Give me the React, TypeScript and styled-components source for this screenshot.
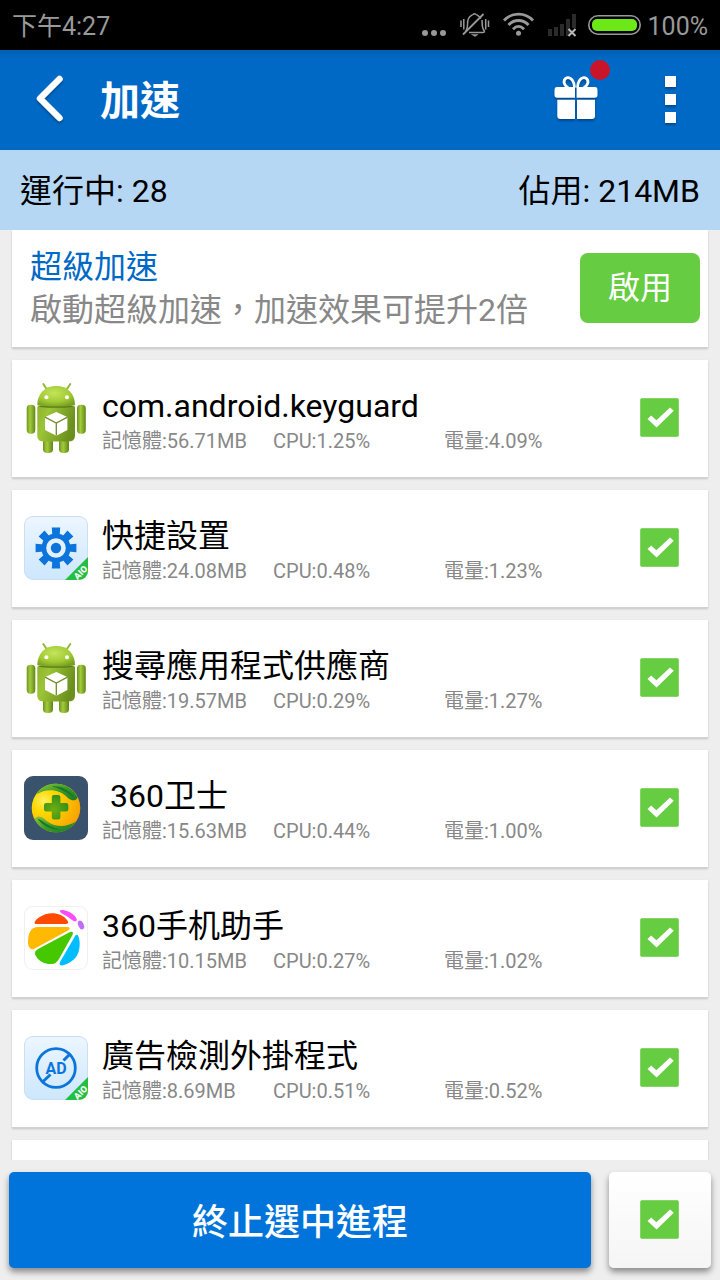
import React, { useState } from "react";
import styled, { createGlobalStyle } from "styled-components";

const GlobalStyle = createGlobalStyle`
  * { box-sizing: border-box; }
  body {
    margin: 0;
    background: #eeeeee;
    font-family: Roboto, "Noto Sans CJK TC", sans-serif;
    color: #000;
  }
  button { font-family: inherit; border: 0; padding: 0; cursor: pointer; }
  svg { display: block; flex: none; }
`;

const Screen = styled.div`
  display: flex;
  flex-direction: column;
  height: 100vh;
`;

const StatusBar = styled.div`
  flex: none;
  display: flex;
  align-items: center;
  justify-content: space-between;
  height: 50px;
  padding: 0 12px;
  background: #000;
  color: #999;
  font-size: 25px;
  line-height: 30px;
`;

const StatusText = styled.span`
  padding-top: 3px;
`;

const StatusIcons = styled.div`
  display: flex;
  align-items: center;
  gap: 12px;
`;

const Battery = styled.div`
  display: flex;
  align-items: center;
  gap: 7px;
`;

const AppBar = styled.header`
  flex: none;
  display: flex;
  align-items: center;
  height: 100px;
  background: linear-gradient(#0060b4, #0069c6 10px);
  color: #fff;
`;

const Title = styled.h1`
  flex: 1;
  margin: 0;
  padding-top: 4px;
  font-size: 40px;
  line-height: 60px;
  font-weight: 700;
`;

const BarButton = styled.button<{ $width: number }>`
  position: relative;
  display: flex;
  align-items: center;
  justify-content: center;
  width: ${(p) => p.$width}px;
  height: 100px;
  background: none;
  svg { filter: drop-shadow(0 2px 1px rgba(0, 0, 0, 0.3)); }
`;

const Badge = styled.span`
  position: absolute;
  top: 10px;
  right: 10px;
  width: 20px;
  height: 20px;
  border-radius: 50%;
  background: #c9142a;
`;

const Stats = styled.div`
  flex: none;
  display: flex;
  align-items: center;
  justify-content: space-between;
  height: 80px;
  padding: 2px 20px 0;
  background: #b5d7f4;
  font-size: 32px;
  line-height: 40px;
`;

const List = styled.ul`
  flex: 1;
  min-height: 0;
  display: flex;
  flex-direction: column;
  gap: 12px;
  margin: 0;
  padding: 0 12px;
  overflow: hidden;
  list-style: none;
`;

const Card = styled.li`
  flex: none;
  display: flex;
  align-items: center;
  min-height: 118px;
  background: #fff;
  border-bottom: 1px solid #d2d2d2;
  box-shadow: 0 1px 2px rgba(0, 0, 0, 0.18);
`;

const PromoCard = styled(Card)`
  justify-content: space-between;
  padding: 0 8px 2px 18px;
`;

const PromoText = styled.div`
  padding-top: 2px;
  font-size: 32px;
  line-height: 43px;
  color: #888;
`;

const PromoTitle = styled.div`
  color: #0069c6;
`;

const EnableButton = styled.button`
  width: 120px;
  height: 70px;
  border-radius: 8px;
  background: #66cc41;
  color: #fff;
  font-size: 32px;
  line-height: 40px;
`;

const AppCard = styled(Card)`
  padding: 0 29px 2px 12px;
`;

const AppInfo = styled.div`
  flex: 1;
  padding: 4px 25px 0 14px;
`;

const AppName = styled.div`
  font-size: 32px;
  line-height: 40px;
  white-space: pre;
`;

const Metrics = styled.div`
  display: grid;
  grid-template-columns: repeat(3, 1fr);
  margin-top: 3px;
  font-size: 20px;
  line-height: 24px;
  color: #888;
  white-space: nowrap;
`;

const CheckLabel = styled.label`
  position: relative;
  display: block;
  flex: none;
  width: 39px;
  height: 39px;
  cursor: pointer;
  input {
    display: block;
    appearance: none;
    width: 39px;
    height: 39px;
    margin: 0;
    border-radius: 2px;
    border: 2px solid #bbb;
    background: #fff;
  }
  input:checked { border: 1px solid #84d566; background: #66cc41; }
  svg {
    position: absolute;
    inset: 0;
    pointer-events: none;
    visibility: hidden;
  }
  input:checked + svg { visibility: visible; }
`;

const Footer = styled.footer`
  flex: none;
  display: flex;
  gap: 18px;
  height: 120px;
  padding: 12px 9px;
`;

const KillButton = styled.button`
  flex: 1;
  border-radius: 5px;
  background: #0074da;
  box-shadow: 0 4px 6px rgba(0, 0, 0, 0.42);
  color: #fff;
  font-size: 36px;
  font-weight: 500;
  line-height: 44px;
  padding-top: 5px;
`;

const SelectAll = styled.div`
  display: flex;
  align-items: center;
  justify-content: center;
  width: 102px;
  padding: 0 2px 2px 0;
  border-radius: 5px;
  background: linear-gradient(#fff, #f5f5f5);
  box-shadow: 0 4px 6px rgba(0, 0, 0, 0.42);
`;

function Check({ label, checked, onChange }: { label: string; checked: boolean; onChange: () => void }) {
  return (
    <CheckLabel>
      <input type="checkbox" aria-label={label} checked={checked} onChange={onChange} />
      <svg width="39" height="39" viewBox="0 0 39 39">
        <path d="M7.5 21 11.2 17.6 16.4 22.2 30 9.4 33.8 12.8 16.6 29.5Z" fill="#fff" />
      </svg>
    </CheckLabel>
  );
}

function AndroidIcon() {
  return (
    <svg width="64" height="72" viewBox="0 0 64 72">
      <defs>
        <linearGradient id="limb" x1="0" x2="1" y1="0" y2="0">
          <stop offset="0" stopColor="#6f9420" />
          <stop offset="0.4" stopColor="#a3cc39" />
          <stop offset="1" stopColor="#628519" />
        </linearGradient>
        <linearGradient id="torso" x1="0" x2="1" y1="0" y2="0.3">
          <stop offset="0" stopColor="#8fb52c" />
          <stop offset="0.3" stopColor="#9cc437" />
          <stop offset="1" stopColor="#6c901d" />
        </linearGradient>
        <radialGradient id="dome" cx="0.45" cy="0.35" r="0.7">
          <stop offset="0" stopColor="#c4e45c" />
          <stop offset="0.6" stopColor="#a2cb35" />
          <stop offset="1" stopColor="#779e20" />
        </radialGradient>
      </defs>
      <path d="M19.3 2 23.3 8M46.3 2 42.3 8" stroke="#94b93a" strokeWidth="2" strokeLinecap="round" />
      <rect x="2.7" y="22.7" width="8.6" height="29" rx="3.6" fill="url(#limb)" />
      <rect x="53" y="22.7" width="8.8" height="29" rx="3.6" fill="url(#limb)" />
      <path d="M19 56H29V67.5Q29 71 24 71T19 67.5Z" fill="url(#limb)" />
      <path d="M35 56H45V67.5Q45 71 40 71T35 67.5Z" fill="url(#limb)" />
      <path d="M13.3 25H51V54Q51 59.5 44 59.5H20Q13.3 59.5 13.3 54Z" fill="url(#torso)" />
      <path d="M13.5 24Q13.5 25.8 32 25.8T51 24Z" fill="#5c7d16" />
      <path d="M13.3 23C13.3 11.5 21 4 32.2 4S51 11.5 51 23Q51 24.4 32.2 24.4T13.3 23Z" fill="url(#dome)" />
      <circle cx="22.4" cy="15.2" r="2" fill="#fff" />
      <circle cx="43" cy="15.2" r="2" fill="#fff" />
      <path d="M32.3 30 43.4 35V48L32.3 53.8 21 48V35Z" fill="#fff" />
      <path d="M21 35.2 32.3 41 43.4 35.2M32.3 41V53.6" stroke="#6f8b2c" strokeWidth="1.3" fill="none" />
    </svg>
  );
}

function AioTile({ id, children }: { id: string; children: React.ReactNode }) {
  return (
    <svg width="64" height="64" viewBox="0 0 64 64">
      <defs>
        <linearGradient id={`${id}-bg`} x1="0" x2="0" y1="0" y2="1">
          <stop offset="0" stopColor="#ecf6ff" />
          <stop offset="1" stopColor="#cde7fd" />
        </linearGradient>
        <clipPath id={`${id}-clip`}>
          <rect width="64" height="64" rx="9" />
        </clipPath>
      </defs>
      <rect x="0.5" y="0.5" width="63" height="63" rx="8.5" fill={`url(#${id}-bg)`} stroke="#c9dff2" />
      {children}
      <path d="M64 41V64H41Z" fill="#22c040" clipPath={`url(#${id}-clip)`} />
      <text
        transform="translate(58.8 58.8) rotate(-45)"
        textAnchor="middle"
        fontFamily="Roboto"
        fontSize="9"
        fontWeight="900"
        fill="#fff"
      >
        AIO
      </text>
    </svg>
  );
}

function GearIcon() {
  return (
    <AioTile id="gear">
      {[0, 45, 90, 135].map((a) => (
        <path key={a} d="M27.8 11.6H36.2L35.600 20V44L36.2 52.4H27.8L28.400 44V20Z" fill="#0b75dc" transform={`rotate(${a} 32 32)`} />
      ))}
      <circle cx="32" cy="32" r="14.6" fill="#0b75dc" />
      <circle cx="32" cy="32" r="9.8" fill="#e3f1fd" />
      <circle cx="32" cy="32" r="5.2" fill="#0b75dc" />
    </AioTile>
  );
}

function AdIcon() {
  return (
    <AioTile id="ad">
      <circle cx="32" cy="32" r="19.3" fill="none" stroke="#0b75dc" strokeWidth="2.8" />
      <path d="M46.5 17.5 39.5 24.500M26.500 38.500 18 46.5" stroke="#0b75dc" strokeWidth="3" />
      <text x="32" y="37.5" textAnchor="middle" fontFamily="Roboto" fontSize="16" fontWeight="700" fill="#0b75dc">
        AD
      </text>
    </AioTile>
  );
}

function GuardIcon() {
  return (
    <svg width="64" height="64" viewBox="0 0 64 64">
      <defs>
        <radialGradient id="gold" cx="0.25" cy="0.35" r="0.8">
          <stop offset="0" stopColor="#fff060" />
          <stop offset="0.3" stopColor="#ffd800" />
          <stop offset="1" stopColor="#f9a000" />
        </radialGradient>
        <linearGradient id="leaf" x1="0" x2="1" y1="0" y2="1">
          <stop offset="0" stopColor="#8cc63c" />
          <stop offset="0.5" stopColor="#3c9a28" />
          <stop offset="1" stopColor="#167a26" />
        </linearGradient>
        <radialGradient id="cross" cx="0.4" cy="0.6" r="0.7">
          <stop offset="0" stopColor="#6fae12" />
          <stop offset="1" stopColor="#2c8a1c" />
        </radialGradient>
      </defs>
      <rect width="64" height="64" rx="9" fill="#38536b" />
      <circle cx="32" cy="32" r="24.3" fill="url(#gold)" />
      <path d="M12 18.5C18 10 24 7.7 32 7.7C42 7.7 50 13.5 53.5 21.5C52 25.5 47 25 43.5 21.5C35 13 23 12 12 18.5Z" fill="url(#leaf)" />
      <path d="M28 10.5C37 9.5 46 14.5 50.5 21.5C44 19 41 13.5 28 10.5Z" fill="#177a28" />
      <path d="M52 45.5C46 54 40 56.3 32 56.3C22 56.3 14 50.5 10.8 43C12 39.5 17 39.5 20.5 43C29 51.5 41 52 52 45.5Z" fill="url(#leaf)" />
      <path d="M36 53.5C27 54.5 18 49.5 13.5 42.5C20 45 23 50.5 36 53.5Z" fill="#177a28" />
      <path
        d="M30 19H34.200Q36.400 19 36.400 21.200V27H42Q44.300 27 44.300 29.200V33.200Q44.300 35.400 42 35.400H36.400V41.200Q36.400 43.400 34.200 43.400H30Q27.800 43.400 27.800 41.200V35.400H22.200Q20 35.400 20 33.200V29.200Q20 27 22.200 27H27.800V21.200Q27.800 19 30 19Z"
        fill="url(#cross)"
      />
    </svg>
  );
}

function AssistantIcon() {
  return (
    <svg width="64" height="64" viewBox="0 0 64 64">
      <rect x="0.5" y="0.5" width="63" height="63" rx="8.5" fill="#fff" stroke="#f0f0f0" />
      <path d="M12 18C9 18 11 14 15 11.5C24 5 37 6 43 14C45.5 17 44 18 41 18Z" fill="#ff4a00" />
      <path d="M43 21H14C7 21 4 27 4 36C4 42 7 44 10 43L44 24.5C46.5 23 46 21 43 21Z" fill="#ffb900" />
      <path d="M45 26.5 14 43C11 45 10 47 12 50C15 56 22 58.5 28 58C31 58 33 56 35 53L48.5 29C50 26 48 25 45 26.5Z" fill="#46c800" />
      <path d="M50.5 31 36 56C34.5 59 37 60 40 59C50 56 55 49 55.5 41C56 37 55.5 32 54 29.5C53 28 51.5 29 50.5 31Z" fill="#00bdff" />
      <path d="M36 5C36 3 43 4 48 7.5C52 10.5 54 14 52 15.3C50 16 47 13 44 11C40 8.5 36 7 36 5Z" fill="#fb4bfb" />
      <ellipse cx="57" cy="19" rx="2.7" ry="4.6" transform="rotate(-25 57 19)" fill="#c36cf8" />
    </svg>
  );
}

const IconCell = styled.div`
  flex: none;
  width: 64px;
`;

const apps = [
  { name: "com.android.keyguard", memory: "56.71MB", cpu: "1.25%", power: "4.09%", Icon: AndroidIcon },
  { name: "快捷設置", memory: "24.08MB", cpu: "0.48%", power: "1.23%", Icon: GearIcon },
  { name: "搜尋應用程式供應商", memory: "19.57MB", cpu: "0.29%", power: "1.27%", Icon: AndroidIcon },
  { name: " 360卫士", memory: "15.63MB", cpu: "0.44%", power: "1.00%", Icon: GuardIcon },
  { name: "360手机助手", memory: "10.15MB", cpu: "0.27%", power: "1.02%", Icon: AssistantIcon },
  { name: "廣告檢測外掛程式", memory: "8.69MB", cpu: "0.51%", power: "0.52%", Icon: AdIcon },
];

export default function App() {
  const [selected, setSelected] = useState<boolean[]>(apps.map(() => true));
  const all = selected.every(Boolean);
  const toggle = (i: number) => setSelected(selected.map((v, n) => (n === i ? !v : v)));

  return (
    <Screen>
      <GlobalStyle />
      <StatusBar>
        <StatusText>下午4:27</StatusText>
        <StatusIcons>
          <svg width="26" height="30" viewBox="0 0 26 30" fill="#999">
            <circle cx="3" cy="23" r="3" />
            <circle cx="12" cy="23" r="3" />
            <circle cx="21" cy="23" r="3" />
          </svg>
          <svg width="31" height="30" viewBox="0 0 31 30" fill="none" stroke="#999" strokeWidth="1.5">
            <path d="M1 10.500V17M3.800 9V19.500M28.500 10.500V17M25.700 9V19.500" />
            <path d="M5.500 21.500C9 17.500 6.500 12 8.500 8.500C9.500 6 11.500 5.500 13 4.500Q14.500 3 16 4.500C17.500 5.500 19.500 6 21 8.500" />
            <path d="M22 10C22.500 15 21.500 18 24.500 21Q24.500 22.500 23 22.500H9" />
            <path d="M23.500 4 3 24.500" strokeWidth="1.800" />
            <path d="M11.500 24.500H18L15 26.500Z" fill="#999" strokeWidth="0.500" />
          </svg>
          <svg width="33" height="30" viewBox="0 0 33 30" fill="none" stroke="#999" strokeWidth="2.8">
            <path d="M1 10.500C9 2 22 2 30 10.500M5.500 15C11 9 20 9 25.500 15M10 19.200C13.500 15.500 17.500 15.500 21 19.200" />
            <circle cx="15.500" cy="23.300" r="2.500" fill="#999" stroke="none" />
          </svg>
          <svg width="28" height="30" viewBox="0 0 28 30">
            <path d="M0 19H4V26H0ZM6 17H10V26H6ZM12 14H16V26H12ZM18 9H22V26H18ZM24 4H28V18H24Z" fill="#2b2b2b" />
            <path d="M20.500 19 27.500 26M27.500 19 20.500 26" stroke="#b8b8b8" strokeWidth="2" />
          </svg>
          <Battery>
            <svg width="53" height="30" viewBox="0 0 53 30">
              <rect x="0.800" y="5.800" width="51.400" height="18.400" rx="9.200" fill="none" stroke="#999" strokeWidth="1.600" />
              <rect x="4" y="9" width="45" height="12" rx="5" fill="#6ce816" />
            </svg>
            <StatusText>100%</StatusText>
          </Battery>
        </StatusIcons>
      </StatusBar>

      <AppBar>
        <BarButton $width={100} aria-label="返回">
          <svg width="30" height="52" viewBox="0 0 30 52" fill="none" stroke="#fff" strokeWidth="6.500" strokeLinecap="round">
            <path d="M24.500 5 5 24.500 24.500 44" strokeLinejoin="round" />
          </svg>
        </BarButton>
        <Title>加速</Title>
        <BarButton $width={88} aria-label="禮物">
          <svg width="44" height="50" viewBox="0 0 44 50">
            <path d="M3 12H21V22.700H3Q0.500 22.700 0.500 20V15Q0.500 12 3 12ZM22.600 12H41Q43.500 12 43.500 15V20Q43.500 22.700 41 22.700H22.600Z" fill="#fff" />
            <path d="M3.300 24.700H21V44H6.300Q3.300 44 3.300 41ZM23 24.700H41V41Q41 44 38 44H23Z" fill="#fff" />
            <path d="M20.500 12.500C20.500 7 17.500 2.600 14 2.600S8.500 7 11.500 10.500L14 12.500M23.500 12.500C23.500 7 26.500 2.600 30 2.600S35.500 7 32.500 10.500L30 12.500" fill="none" stroke="#fff" strokeWidth="2.800" />
          </svg>
          <Badge />
        </BarButton>
        <BarButton $width={100} aria-label="更多">
          <svg width="11" height="48" viewBox="0 0 11 48">
            <path d="M0 0H11V11H0ZM0 18H11V29H0ZM0 36H11V47H0Z" fill="#fff" />
          </svg>
        </BarButton>
      </AppBar>

      <Stats>
        <span>運行中: 28</span>
        <span>佔用: 214MB</span>
      </Stats>

      <List>
        <PromoCard>
          <PromoText>
            <PromoTitle>超級加速</PromoTitle>
            <div>啟動超級加速，加速效果可提升2倍</div>
          </PromoText>
          <EnableButton>啟用</EnableButton>
        </PromoCard>
        {apps.map(({ name, memory, cpu, power, Icon }, i) => (
          <AppCard key={name}>
            <IconCell>
              <Icon />
            </IconCell>
            <AppInfo>
              <AppName>{name}</AppName>
              <Metrics>
                <span>記憶體:{memory}</span>
                <span>CPU:{cpu}</span>
                <span>電量:{power}</span>
              </Metrics>
            </AppInfo>
            <Check label={name} checked={selected[i]} onChange={() => toggle(i)} />
          </AppCard>
        ))}
        <AppCard aria-hidden="true" />
      </List>

      <Footer>
        <KillButton>終止選中進程</KillButton>
        <SelectAll>
          <Check label="全選" checked={all} onChange={() => setSelected(apps.map(() => !all))} />
        </SelectAll>
      </Footer>
    </Screen>
  );
}
